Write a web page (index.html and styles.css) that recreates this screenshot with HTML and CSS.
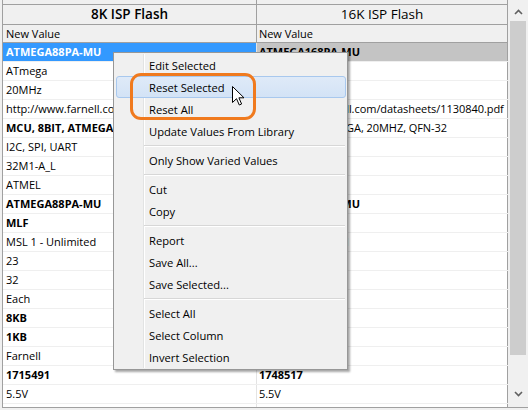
FILE: index.html
```html
<!DOCTYPE html>
<html>
<head>
<meta charset="utf-8">
<link rel="stylesheet" href="styles.css">
</head>
<body>
<div class="frame">
  <div class="grid">
    <div class="line strip"><div class="c1"></div><div class="c2"></div></div>
    <div class="line hdr"><div class="c1 title semi">8K ISP Flash</div><div class="c2 title">16K ISP Flash</div></div>
    <div class="line sub"><div class="c1">New Value</div><div class="c2">New Value</div></div>
    <div class="rows">
      <div class="row"><div class="c1 sel b">ATMEGA88PA-MU</div><div class="c2 gray b">ATMEGA168PA-MU</div></div>
      <div class="row"><div class="c1">ATmega</div><div class="c2">ATmega</div></div>
      <div class="row"><div class="c1">20MHz</div><div class="c2">20MHz</div></div>
      <div class="row"><div class="c1">http://www.farnell.com/datasheets/1130840.pdf</div><div class="c2">http://www.farnell.com/datasheets/1130840.pdf</div></div>
      <div class="row"><div class="c1 b">MCU, 8BIT, ATMEGA, 20MHZ, QFN-32</div><div class="c2">MCU, 8BIT, ATMEGA, 20MHZ, QFN-32</div></div>
      <div class="row"><div class="c1">I2C, SPI, UART</div><div class="c2">I2C, SPI, UART</div></div>
      <div class="row"><div class="c1">32M1-A_L</div><div class="c2">32M1-A_L</div></div>
      <div class="row"><div class="c1">ATMEL</div><div class="c2">ATMEL</div></div>
      <div class="row"><div class="c1 b">ATMEGA88PA-MU</div><div class="c2 b">ATMEGA168PA-MU</div></div>
      <div class="row"><div class="c1 b">MLF</div><div class="c2">MLF</div></div>
      <div class="row"><div class="c1">MSL 1 - Unlimited</div><div class="c2">MSL 1 - Unlimited</div></div>
      <div class="row"><div class="c1">23</div><div class="c2">23</div></div>
      <div class="row"><div class="c1">32</div><div class="c2">32</div></div>
      <div class="row"><div class="c1">Each</div><div class="c2">Each</div></div>
      <div class="row"><div class="c1 b">8KB</div><div class="c2 b">16KB</div></div>
      <div class="row"><div class="c1 b">1KB</div><div class="c2">1KB</div></div>
      <div class="row"><div class="c1">Farnell</div><div class="c2">Farnell</div></div>
      <div class="row"><div class="c1 b">1715491</div><div class="c2 b">1748517</div></div>
      <div class="row"><div class="c1">5.5V</div><div class="c2">5.5V</div></div>
      <div class="row"><div class="c1"></div><div class="c2"></div></div>
    </div>
  </div>
  <div class="scroll">
    <div class="sbtn up"><svg width="9" height="6" viewBox="0 0 9 6"><path d="M1 5 L4.5 1.5 L8 5" fill="none" stroke="#606060" stroke-width="1.6"/></svg></div>
    <div class="thumb"></div>
    <div class="track"></div>
    <div class="sbtn down"><svg width="9" height="6" viewBox="0 0 9 6"><path d="M1 1 L4.5 4.5 L8 1" fill="none" stroke="#606060" stroke-width="1.6"/></svg></div>
  </div>
</div>

<div class="menu">
  <div class="item">Edit Selected</div>
  <div class="item hot">Reset Selected</div>
  <div class="item">Reset All</div>
  <div class="item">Update Values From Library</div>
  <div class="sep"></div>
  <div class="item">Only Show Varied Values</div>
  <div class="sep"></div>
  <div class="item">Cut</div>
  <div class="item">Copy</div>
  <div class="sep"></div>
  <div class="item">Report</div>
  <div class="item">Save All...</div>
  <div class="item">Save Selected...</div>
  <div class="sep"></div>
  <div class="item">Select All</div>
  <div class="item">Select Column</div>
  <div class="item">Invert Selection</div>
</div>

<div class="ring"></div>

<svg class="cursor" width="13" height="20" viewBox="0 0 13 20">
  <path d="M0.5 0.5 L0.5 16.5 L4.5 12.7 L7.3 19 L9.6 18 L6.9 11.8 L12 11.8 Z" fill="#fff" stroke="#000" stroke-width="1" stroke-linejoin="miter"/>
</svg>
</body>
</html>
```
FILE: styles.css
```css
html, body {
  margin: 0;
  padding: 0;
}
body {
  width: 528px;
  height: 410px;
  background: #f0f0f0;
  font-family: "Open Sans", "Noto Sans", sans-serif;
  font-size: 11px;
  color: #000;
  position: relative;
  overflow: hidden;
}
.frame {
  margin-left: 2px;
  width: 526px;
  height: 407px;
  border-left: 1px solid #a0a0a0;
  border-bottom: 1px solid #a0a0a0;
  box-sizing: content-box;
  display: flex;
  background: #fff;
}
.grid {
  width: 505px;
  height: 407px;
  overflow: hidden;
  display: flex;
  flex-direction: column;
}
.line {
  display: flex;
  flex: none;
  background: #f0f0f0;
  border-bottom: 1px solid #a0a0a0;
}
.line .c1 { border-right: 1px solid #a0a0a0; }
.line .c2 { border-right: 1px solid #a0a0a0; }
.c1, .c2 {
  flex: none;
  white-space: nowrap;
  overflow: hidden;
  box-sizing: content-box;
}
.c1 { width: 250px; padding-left: 3px; border-right: 1px solid #e4e4e4; }
.c2 { width: 248px; padding-left: 2px; border-right: 1px solid #a0a0a0; letter-spacing: -0.05px; }
.strip { height: 4px; }
.hdr { height: 19px; }
.title {
  text-align: center;
  font-size: 13.5px;
  line-height: 19px;
  padding-left: 0;
  letter-spacing: 0;
}
.hdr .c1 { width: 253px; }
.hdr .c2 { width: 250px; }
.semi { font-weight: 600; }
.sub { height: 17px; line-height: 17px; }
.rows {
  display: flex;
  flex-direction: column;
  flex: none;
}
.row {
  display: flex;
  flex: none;
  height: 18px;
  line-height: 18px;
  border-bottom: 1px solid #efefef;
}
.b { font-weight: 700; }
.sel { background: #3399ff; color: #fff; }
.gray { background: #c4c4c4; }
.scroll {
  width: 20px;
  height: 407px;
  background: #f0f0f0;
  display: flex;
  flex-direction: column;
  align-items: center;
}
.sbtn {
  width: 20px;
  display: flex;
  align-items: center;
  justify-content: center;
  flex: none;
}
.sbtn.up { height: 21px; padding-top: 2px; box-sizing: border-box; }
.sbtn.down { height: 22px; padding-bottom: 4px; box-sizing: border-box; }
.thumb {
  width: 16px;
  height: 334px;
  background: #cdcdcd;
  flex: none;
}
.track { flex: 1; }

.menu {
  position: absolute;
  left: 113px;
  top: 52px;
  width: 235px;
  box-sizing: border-box;
  background: #f0f0f0;
  border: 1px solid #979797;
  padding: 1px 1px 1px 2px;
  box-shadow: 2px 2px 2px rgba(0, 0, 0, 0.35);
  font-size: 11.2px;
}
.menu::before {
  content: "";
  position: absolute;
  left: 29px;
  top: 1px;
  bottom: 1px;
  width: 1px;
  background: #e2e3e3;
  border-right: 1px solid #ffffff;
}
.item {
  position: relative;
  height: 22px;
  line-height: 22px;
  padding-left: 32px;
  border: 1px solid transparent;
  box-sizing: border-box;
  border-radius: 3px;
}
.item.hot {
  background: linear-gradient(#dfeaf8, #d3e3f6);
  border-color: #a8c8ee;
}
.sep {
  position: relative;
  height: 7px;
  margin-left: 28px;
}
.sep::after {
  content: "";
  position: absolute;
  left: 0;
  right: 1px;
  top: 3px;
  height: 1px;
  background: #d7d7d7;
  border-bottom: 1px solid #ffffff;
}
.ring {
  position: absolute;
  left: 130px;
  top: 73px;
  width: 126px;
  height: 47px;
  box-sizing: border-box;
  border: 3px solid #f07a1e;
  border-radius: 11px;
}
.cursor {
  position: absolute;
  left: 232px;
  top: 86px;
}
```
